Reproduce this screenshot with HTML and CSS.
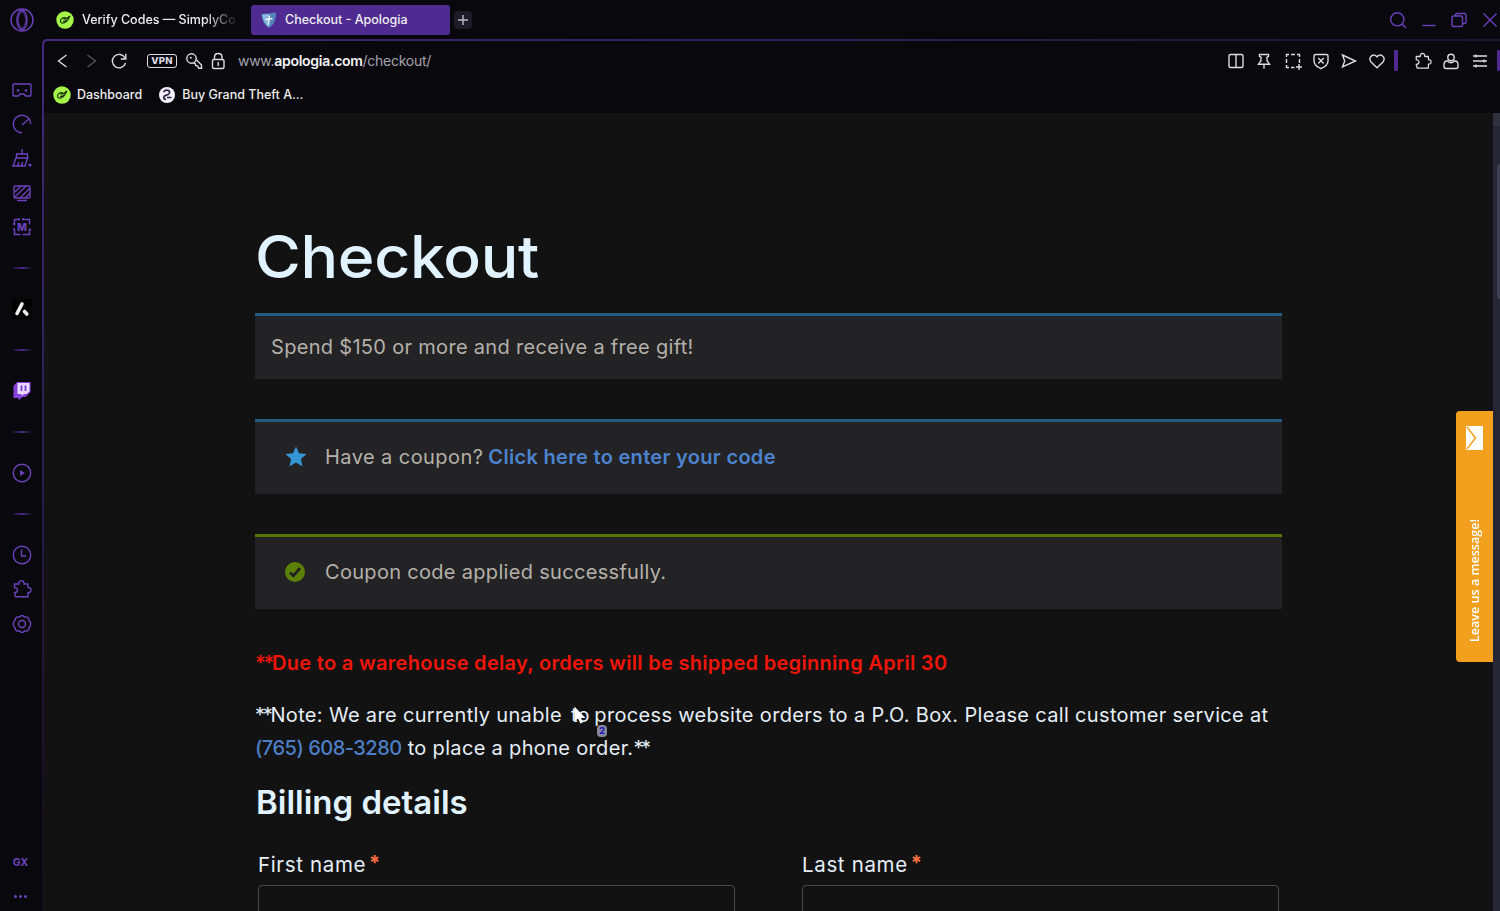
FILE: index.html
```
<!DOCTYPE html>
<html lang="en">
<head>
<meta charset="utf-8">
<title>Checkout - Apologia</title>
<link rel="stylesheet" href="styles.css">
</head>
<body>
<svg class="defs" aria-hidden="true">
  <symbol id="puzzle" viewBox="0 0 20 20"><path stroke-linejoin="round" d="M3.500 17.800h12.500V13.500c4 .6 4-5.600 0-5V5h-4c.6-4.500-5.600-4.500-5 0H2.500v3.700c4-.4 4 4.800 0 5z"/></symbol>
  <symbol id="simply" viewBox="0 0 18 18"><circle cx="9" cy="9" r="8.700" fill="#a5f548" stroke="none"/><path d="M14 5 10.500 7.600c-1-1-3-1.500-4.800 0-2.200 1.800-1.200 4.600 1 4.600 2.900 0 5.300-3 7.300-7.200M7.500 8.200l3.500-.6M7 10.200q2 .6 4-1" fill="none" stroke="#17320a" stroke-width="1.200"/></symbol>
</svg>
<div class="browser">
  <aside class="sidebar">
    <div class="opera"><svg class="i24" viewBox="0 0 24 24"><circle cx="12" cy="12" r="11"/><ellipse cx="12" cy="12" rx="5" ry="9.500"/><path d="M9 1.800a9 10.500 0 0 1 0 20.400M15 1.800a9 10.500 0 0 0 0 20.400" opacity=".55"/></svg></div>
    <div class="item"><svg class="i20" viewBox="0 0 20 20"><path d="M2 4h16q1 0 1 1v10q0 1-1 1h-4.500l-1.500-2H8l-1.500 2H2q-1 0-1-1V5q0-1 1-1z"/><circle class="solid" cx="6" cy="10.500" r="1.300"/><circle class="solid" cx="14" cy="10.500" r="1.300"/></svg></div>
    <div class="item"><svg class="i20" viewBox="0 0 20 20"><path d="M10 18.700A8.700 8.700 0 1 1 18.700 10M10 11l7.500-6.500"/></svg></div>
    <div class="item"><svg class="i20" viewBox="0 0 20 20"><path d="M10 1v5M4.500 10V6h11v4M3.500 10h13M4 10l-3 8h12l2.500-8M5.500 18l1.500-4M9.500 18l1-4"/><circle class="solid" cx="18" cy="17" r="1.600"/></svg></div>
    <div class="item"><svg class="i20" viewBox="0 0 20 20"><rect x="2" y="3" width="16" height="12" rx="1"/><path d="M5 17.500h10M3 9l6-6M3 14 14 3M8 15 18 5M13 15l5-5"/></svg></div>
    <div class="item"><svg class="i20" viewBox="0 0 20 20"><path d="M5 2.500h3m2 0h7.500v5m0 4v6h-7m-2 0h-6v-6m0-3v-6h3M.8 7h1.700M.8 12h1.700M17.500 12.500h1.700M7 1v1.500M11 1v1.500"/><text x="10" y="13.800" text-anchor="middle" class="m">M</text></svg></div>
    <div class="sep"></div>
    <div class="item"><svg class="i20" viewBox="0 0 20 20"><path d="M0 0h20v20H0z" fill="#000" stroke="none"/><path d="M10 5 5 14.500M12.500 12.500l2.300 2.500" stroke="#eee" stroke-width="3.600" stroke-linecap="round"/></svg></div>
    <div class="sep"></div>
    <div class="item"><svg class="i20" viewBox="0 0 20 20"><path d="M1.500 5 5 1h13.500v10l-5 5h-3l-4 3.500V17h-5z" fill="#8640dc" stroke="none"/><path d="M5.500 2h12v8.500L14.500 13H12l-2.500 2v-2h-4z" fill="#ead9ff" stroke="none"/><path d="M9.500 4.500V10M13.500 4.500V10" stroke="#7a3ccc" stroke-width="1.800"/></svg></div>
    <div class="sep"></div>
    <div class="item"><svg class="i20" viewBox="0 0 20 20"><circle cx="10" cy="10" r="8.700"/><path class="solid" d="M8 7l5 3-5 3z"/></svg></div>
    <div class="sep"></div>
    <div class="item"><svg class="i20" viewBox="0 0 20 20"><circle cx="10" cy="10" r="8.700"/><path d="M9.500 4.500V11H14"/></svg></div>
    <div class="item"><svg class="i20"><use href="#puzzle"/></svg></div>
    <div class="item"><svg class="i20" viewBox="0 0 20 20"><path d="M7.500 3Q10 0 12.500 3q4-.8 4.500 3.200Q20.500 10 17 13.800q-.5 4-4.500 3.200-2.500 3-5 0-4 .8-4.500-3.200Q-.5 10 3 6.200 3.500 2.200 7.500 3z"/><circle cx="10" cy="10" r="3.500"/></svg></div>
    <div class="gx">GX</div>
    <div class="dots"><i></i><i></i><i></i></div>
  </aside>
  <div class="main">
    <header class="tabs">
      <div class="tab"><svg class="i18"><use href="#simply"/></svg><span class="fade">Verify Codes — SimplyCo</span></div>
      <div class="tab active"><svg class="i16" viewBox="0 0 16 16"><path d="M8 1.500 15 .5C15 8 13 13 8 16 3 13 1 8 .5 2z" fill="#5486bd" stroke="none"/><path d="M8 2 1 2.500C2 8 4 12 8 15z" fill="#8bb8df" stroke="none"/><path d="M8.500 3.500 7.500 13M4.500 7.500l7-1" stroke="#eef7ff" stroke-width="1.400"/></svg><span>Checkout - Apologia</span></div>
      <div class="newtab"><svg viewBox="0 0 18 18"><path d="M9 4v10M4 9h10"/></svg></div>
      <div class="winctl">
        <svg class="i18" viewBox="0 0 18 18"><circle cx="8.300" cy="8.300" r="6.600"/><path d="m13 13 4 4"/></svg>
        <svg class="i18" viewBox="0 0 18 18"><path d="M2.500 14.500h13"/></svg>
        <svg class="i18" viewBox="0 0 18 18"><rect x="2" y="5" width="10.500" height="10.500" rx="1.500"/><path d="M5.500 5V4q0-1.500 1.500-1.500h7.500Q16 2.500 16 4v7q0 1.500-1.500 1.500h-2"/></svg>
        <svg class="i18" viewBox="0 0 18 18"><path d="m2.500 2.500 13 13M15.500 2.500l-13 13"/></svg>
      </div>
    </header>
    <div class="frame">
      <nav class="toolbar">
        <div class="nav">
          <svg class="i18" viewBox="0 0 18 18"><path d="m12.500 3-8 6 8 6"/></svg>
          <svg class="i18 dim" viewBox="0 0 18 18"><path d="m5.500 3 8 6-8 6"/></svg>
          <svg class="i18" viewBox="0 0 18 18"><path d="M15.500 11A6.700 6.700 0 1 1 15 6M15.800 1.800V7h-5"/></svg>
        </div>
        <span class="vpn">VPN</span>
        <svg class="i18 key" viewBox="0 0 18 18"><circle cx="6.500" cy="6.500" r="4.700"/><circle class="solid" cx="5.800" cy="5.800" r="1"/><path d="m11 7.500 5.500 5.500v3.300h-2.800l-1-2.300-2-.5-.5-2-2-.7"/></svg>
        <svg class="i18 lock" viewBox="0 0 18 18"><rect x="3.500" y="7.500" width="11.500" height="9" rx="1.500"/><path d="M5.500 7.500V5q0-3.500 3.700-3.500T13 5v2.500M9.200 10v4"/></svg>
        <span class="url">www.<b>apologia.com</b>/checkout/</span>
        <div class="tools">
          <svg class="i18" viewBox="0 0 18 18"><rect x="2" y="2.500" width="14" height="13" rx="1.500"/><path d="M9 2.500v13"/></svg>
          <svg class="i18" viewBox="0 0 18 18"><path d="M4.500 2.500h9v2l-1.500.7v3.500l2.500 3.500h-11L6 8.700V5.200l-1.500-.7zM9 12.200v4.500"/></svg>
          <svg class="i18" viewBox="0 0 18 18"><path d="M5 2.500H2.500V5m0 2v4m0 2v2.500H5m2 0h3.500M7 2.500h4m2 0h2.500V5m0 2v4M15 12v6M12 15h6"/></svg>
          <svg class="i18" viewBox="0 0 18 18"><path d="M3.500 2.500h11q1.500 0 1.500 1.500v5q0 4.500-7 7.700Q2 13.500 2 9V4q0-1.500 1.500-1.500zM6.300 6l5.400 5.400m0-5.400-5.400 5.400"/></svg>
          <svg class="i18" viewBox="0 0 18 18"><path d="M2.500 3 15.500 9l-13 6 2.200-6z"/></svg>
          <svg class="i18" viewBox="0 0 18 18"><path d="M9 15.800 3 10C-.3 5.500 5.500.3 9 4.800 12.500.3 18.300 5.500 15 10z"/></svg>
        </div>
        <div class="bar"></div>
        <div class="tools">
          <svg class="i18"><use href="#puzzle"/></svg>
          <svg class="i18" viewBox="0 0 18 18"><circle cx="9" cy="5.500" r="3.200"/><path d="M5.500 9H4q-2 1-2 3v2.500q0 2 2 2h10q2 0 2-2V12q0-2-2-3h-1.500Q9 12.500 5.500 9z"/></svg>
          <svg class="i18" viewBox="0 0 18 18"><path d="M2 4h14M2 9h14M2 14h14M5 2.500v3M13 7.500v3M5 12.500v3"/></svg>
        </div>
        <div class="bar end"></div>
      </nav>
      <div class="bookmarks">
        <a><svg class="i18"><use href="#simply"/></svg>Dashboard</a>
        <a><svg class="i18" viewBox="0 0 18 18"><circle cx="9" cy="9" r="8" fill="#f4f0ff" stroke="none"/><path d="M5.500 6Q7.500 3.500 10.500 4.500q2.500 2-.5 4L6.500 10q-2 3 1.500 3.500M9 11.500h4.500" stroke="#29203c" stroke-width="1.700"/></svg>Buy Grand Theft A...</a>
      </div>
      <div class="viewport">
        <main class="page">
          <h1>Checkout</h1>
          <div class="notice first"><span class="t1">Spend $150 or more and receive a free gift!</span></div>
          <div class="notice tall"><svg class="mark" viewBox="0 0 22 22"><path d="m11 .5 3 6.800 7.500.7-5.600 5 1.600 7.500-6.500-3.900-6.500 3.900L6.100 13 .5 8 8 7.300z" fill="#3594d4" stroke="none"/></svg><span class="t2">Have a coupon?</span><a class="t3">Click here to enter your code</a></div>
          <div class="notice tall ok"><svg class="mark" viewBox="0 0 22 22"><circle cx="10" cy="11" r="10" fill="#5c8107" stroke="none"/><path d="m5 11.500 3.500 3.200L15 7.200" stroke="#202122" stroke-width="2.800"/></svg><span class="t4">Coupon code applied successfully.</span></div>
          <p class="warning"><span class="stars">**</span>Due to a warehouse delay, orders will be shipped beginning April 30</p>
          <p class="note"><span class="stars">**</span>Note: We are currently unable <span class="to">to</span> process website orders to a P.O. Box. Please call customer service at<br><a>(765) 608-3280</a> to place a phone order.<span class="stars">**</span></p>
          <h2>Billing details</h2>
          <div class="form">
            <label>First name<sup>*</sup><input type="text"></label>
            <label>Last name<sup>*</sup><input type="text"></label>
          </div>
        </main>
        <div class="scroll"><i class="up"></i><i class="thumb"></i></div>
      </div>
    </div>
  </div>
</div>
<div class="message"><svg viewBox="0 0 18 24"><path d="M0 0h17v24H0z" fill="#fff" stroke="none"/><path d="M1 1 9.500 12 1 23" stroke="#f3a01f" stroke-width="1.500"/></svg><span>Leave us a message!</span></div>
<svg class="cursor" viewBox="0 0 12 18"><path d="M.5.500v15l3.500-3 2.500 5 2.500-1.200L6.800 12h4.700z" fill="#fff" stroke="none"/></svg>
<span class="badge">2</span>
</body>
</html>
```
FILE: styles.css
```
* { box-sizing: border-box; }
body { margin: 0; background: #09090d; color: #eee; font-family: Inter, "Liberation Sans", sans-serif; overflow: hidden; }
svg { fill: none; stroke: currentColor; stroke-width: 1.4; flex: none; display: block; overflow: visible; }
.solid { fill: currentColor; stroke: none; }
.defs { position: absolute; width: 0; height: 0; }
.i16 { width: 16px; height: 16px; }
.i18 { width: 18px; height: 18px; }
.i20 { width: 20px; height: 20px; }
.i24 { width: 24px; height: 24px; }

.browser { display: flex; width: 1500px; height: 911px; }
.sidebar { width: 42px; display: flex; flex-direction: column; color: #6d42bd; padding-left: 1px; }
.sidebar > div { flex: none; display: flex; align-items: center; justify-content: center; }
.opera { height: 72.5px; padding-bottom: 33.5px; }
.item { height: 34.4px; }
.m { font-size: 10.5px; font-weight: 800; fill: currentColor; stroke: none; }
.sep { height: 47.5px; }
.sep::before { content: ""; width: 18px; height: 2px; background: linear-gradient(90deg, #171028, #4a2c86, #171028); }
.sidebar .gx { margin-top: auto; height: 41px; font-size: 10.5px; font-weight: 700; padding-right: 2px; }
.sidebar .dots { height: 28.5px; gap: 2px; padding-right: 2px; }
.dots i { width: 3px; height: 3px; border-radius: 50%; background: #6b42bc; }

.main { width: 1458px; display: flex; flex-direction: column; }
.tabs { flex: none; height: 39px; display: flex; align-items: center; font-size: 12.5px; font-weight: 500; }
.tab { width: 209px; height: 30px; display: flex; align-items: center; gap: 8px; padding-left: 14px; white-space: nowrap; }
.fade { width: 155px; -webkit-mask-image: linear-gradient(90deg, #000 122px, transparent 157px); mask-image: linear-gradient(90deg, #000 122px, transparent 157px); }
.tab.active { width: 199px; background: #4f2a91; border-radius: 3px; gap: 8px; padding-left: 10px; }
.newtab { margin-left: 4px; width: 18px; height: 18px; background: #1c1b26; border-radius: 4px; color: #bdb9cb; }
.winctl { margin-left: auto; display: flex; gap: 12.700px; color: #6a40bd; padding-right: 1px; }

.frame { flex: 1; display: flex; flex-direction: column; padding: 2px 0 0 2px; border-radius: 5px 0 0 0; background: linear-gradient(155deg, #44277f 0, #30205a 22%, #171124 48%, #0e0d13 60%); }
.toolbar { flex: none; height: 40px; display: flex; align-items: center; color: #dcdae2; background: #09090d; border-radius: 4px 0 0 0; padding-bottom: 1px; }
.nav { display: flex; gap: 10px; padding-left: 10px; }
.dim { color: #55535e; }
.vpn { margin-left: 19px; width: 30px; height: 14px; border: 1.500px solid #dcdae2; border-radius: 3px; font-size: 9.500px; line-height: 12px; font-weight: 800; text-align: center; letter-spacing: .2px; }
.key { margin-left: 8px; }
.lock { margin-left: 6px; }
.url { margin-left: 11px; font-size: 14px; letter-spacing: -.28px; color: #a5a2ad; }
.url b { font-weight: 600; color: #f4f3f7; }
.tools { display: flex; gap: 10.300px; }
.toolbar .tools { margin-left: auto; }
.toolbar .bar + .tools { margin-left: 15.5px; }
.bar { width: 4px; height: 21px; border-radius: 1px; background: #4f2a91; margin-left: 8px; }
.bar.end { width: 3.5px; }
.bookmarks { flex: none; height: 32px; display: flex; gap: 16px; padding: 0 0 5px 9px; font-size: 12.500px; font-weight: 500; background: #09090d; }
.bookmarks a { display: flex; align-items: center; gap: 6px; }

.viewport { flex: 1; display: flex; justify-content: space-between; background: #121212; overflow: hidden; }
.page { width: 1238px; padding: 112px 0 0 211px; font-size: 20px; white-space: nowrap; color: #e5eef6; letter-spacing: .31px; }
h1, h2, p { margin: 0; }
h1 { width: 300px; font-size: 59px; line-height: 64px; font-weight: 500; letter-spacing: -.3px; transform: scaleX(1.06); transform-origin: 0 50%; color: #e1f3ff; }
.notice { display: flex; align-items: center; background: #232325; color: #b5b1aa; border-top: 3px solid #255a80; padding-bottom: 2px; }
.first { margin-top: 24px; height: 66px; padding-left: 16px; }
.tall { margin-top: 40px; height: 75px; padding-left: 30px; }
.ok { border-color: #567604; }
.mark { width: 22px; height: 22px; margin-right: 18px; }
.t2 { letter-spacing: .43px; }
.t3 { margin-left: 5px; color: #4d83ce; font-weight: 600; }
.warning { margin-top: 38px; line-height: 32px; color: #ef1509; font-weight: 600; }
.stars { letter-spacing: -2.300px; }
.note { margin-top: 20px; line-height: 32.500px; letter-spacing: .33px; }
.to { margin-left: 3px; }
.to + * { margin-left: 0; }
.note a { color: #4d7fc5; font-weight: 500; letter-spacing: -.5px; }
.note .to { letter-spacing: .33px; margin-right: -1.5px; }
h2 { margin-top: 17px; font-size: 33px; line-height: 42px; font-weight: 600; letter-spacing: 0; padding-left: 1px; color: #e1f3ff; }
.form { margin: 25px 3px 0; display: grid; grid-template-columns: 477px 477px; gap: 67px; }
.form label { line-height: 34px; font-size: 20.5px; letter-spacing: .65px; }
.form sup { margin-left: 3px; color: #ff7043; font-size: 20px; font-weight: 700; line-height: 0; vertical-align: 2px; }
.form input { display: block; width: 477px; height: 50px; margin-top: 3px; background: #111; border: 1px solid #4a4a4a; border-radius: 4px; }
.scroll { width: 7px; background: #242636; overflow: hidden; }
.scroll i { display: block; }
.up { height: 51px; background: linear-gradient(#30303e 0 13px, transparent 13px); }
.thumb { height: 135px; margin-left: 4px; background: #414153; border-radius: 3px 0 0 3px; }

.message { position: absolute; left: 1456px; top: 411px; width: 37px; height: 251px; display: flex; flex-direction: column; align-items: center; justify-content: space-between; padding: 15px 0 20px; background: #f3a01f; border-radius: 4px 0 0 4px; color: #fff; }
.message svg { width: 18px; height: 24px; }
.message span { writing-mode: vertical-rl; transform: rotate(180deg); font: 600 12.6px/20px "Open Sans", sans-serif; }
.cursor { position: absolute; left: 574px; top: 706px; width: 12px; height: 18px; }
.badge { position: absolute; left: 597px; top: 725px; width: 10px; height: 12px; border-radius: 4px; background: #88889a; color: #1d16b8; font-size: 9px; line-height: 12px; font-weight: 800; text-align: center; }
```
